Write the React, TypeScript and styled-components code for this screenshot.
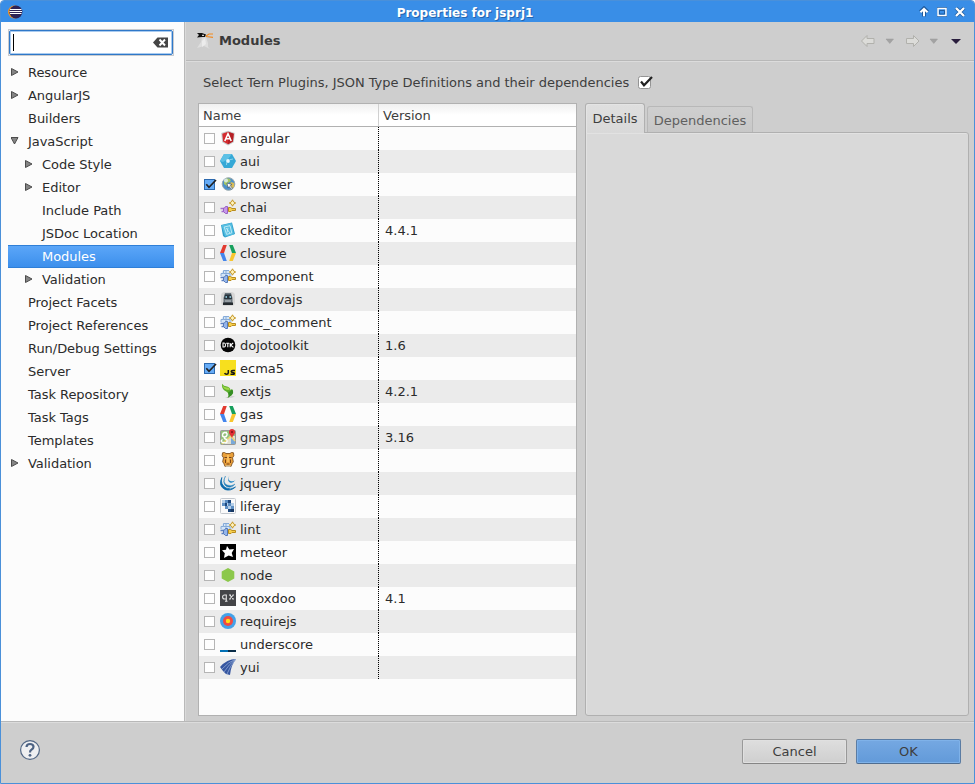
import React from "react";
import styled, { createGlobalStyle, css } from "styled-components";

const GlobalStyle = createGlobalStyle`
  * { box-sizing: border-box; }
  body { margin: 0; background: #fff; overflow: hidden; }
  svg { display: block; flex: none; }
`;

const Window = styled.div`
  width: 975px;
  height: 784px;
  border: 1px solid #4a90d9;
  border-radius: 4px 4px 0 0;
  background: #cecece;
  overflow: hidden;
  display: flex;
  flex-direction: column;
  font: 13px/23px "DejaVu Sans", sans-serif;
  color: #2b2b2b;
  white-space: nowrap;
`;

const TitleBar = styled.header`
  height: 21px;
  flex: none;
  display: grid;
  grid-template-columns: 80px 1fr 62px;
  align-items: center;
  padding: 0 0 0 7px;
  background: #398ee7;
`;

const Title = styled.h1`
  margin: 0;
  padding: 2px 70px 0 0;
  font-size: 12px;
  line-height: 20px;
  font-weight: bold;
  text-align: center;
  color: #fff;
  text-shadow: 1px 1px 0 #2465ae;
`;

const WindowControls = styled.div`
  display: flex;
  gap: 6px;
  padding: 0 0 0 6px;
`;

const Body = styled.div`
  height: 700px;
  flex: none;
  display: flex;
  border-bottom: 1px solid #b8b8b8;
`;

const Sidebar = styled.aside`
  width: 184px;
  flex: none;
  background: #fcfcfc;
  border-right: 1px solid #b9b9b9;
  padding: 7px 10px 0 7px;
`;

const SearchFrame = styled.div`
  width: 166px;
  height: 27px;
  border: 1px solid #c9cbce;
  margin-bottom: 5px;
`;

const SearchField = styled.div`
  height: 25px;
  border: 1px solid #2f78c8;
  box-shadow: inset 0 0 0 1px #a9cbf0;
  border-radius: 2px;
  background: #fff;
  display: flex;
  align-items: center;
  justify-content: space-between;
  padding: 0 4px 0 3px;
`;

const Caret = styled.span`
  width: 1px;
  height: 17px;
  background: #000;
`;

const TreeRow = styled.div<{ $level: number; $selected?: boolean }>`
  height: 23px;
  width: 166px;
  display: flex;
  align-items: center;
  letter-spacing: -0.04px;
  padding-left: ${(p) => 3 + p.$level * 14}px;
  ${(p) =>
    p.$selected &&
    css`
      color: #fff;
      background: linear-gradient(#5ba6f8, #3c8fec);
      border-top: 1px solid #2f7fd7;
      border-bottom: 1px solid #2f7fd7;
    `}
`;

const Twisty = styled.span`
  width: 17px;
  height: 8px;
  flex: none;
  margin-top: -2px;
`;

const Main = styled.main`
  flex: 1;
  border-left: 1px solid #dadada;
`;

const PageHeader = styled.div`
  height: 39px;
  border-bottom: 1px solid #b8b8b8;
  box-shadow: 0 1px 0 #dcdcdc;
  display: flex;
  align-items: center;
  padding: 0 12px 0 11px;
`;

const PageTitle = styled.h2`
  margin: -1px auto 0 5px;
  font-size: 13px;
  font-weight: bold;
  color: #3a3a3a;
`;

const Prompt = styled.div`
  height: 42px;
  display: flex;
  align-items: center;
  gap: 9px;
  padding: 1px 0 0 17px;
  letter-spacing: -0.03px;
  color: #3e3e3e;
`;

const Panels = styled.div`
  display: flex;
  gap: 8px;
  padding-left: 12px;
`;

const Table = styled.section`
  width: 379px;
  height: 613px;
  border: 1px solid #b1b1b1;
  background: #fcfcfc;
`;

const TableHeader = styled.div`
  height: 23px;
  display: grid;
  grid-template-columns: 180px 1fr;
  color: #3e3e3e;
  background: linear-gradient(#f0f0f0, #fff 50%);
  border-bottom: 1px solid #b1b1b1;
`;

const HeaderCell = styled.div`
  height: 22px;
  padding-left: 4px;
  & + & {
    border-left: 1px solid #d0d0d0;
    margin-left: -1px;
  }
`;

const TableRow = styled.div<{ $shaded: boolean }>`
  height: 23px;
  display: grid;
  grid-template-columns: 179px 1fr;
  background: ${(p) => (p.$shaded ? "#ebebeb" : "#fcfcfc")};
`;

const NameCell = styled.div`
  display: flex;
  align-items: center;
  padding-left: 5px;
`;

const Label = styled.span`
  margin-left: 4px;
`;

const VersionCell = styled.div`
  padding-left: 7px;
  background: repeating-linear-gradient(#000 0 1px, transparent 1px 2px) left top / 1px 100% no-repeat;
`;

const IconSlot = styled.span`
  width: 16px;
  height: 16px;
  margin: -1px 0 0 3px;
`;

const TabFolder = styled.section`
  width: 384px;
  height: 613px;
  display: flex;
  flex-direction: column;
`;

const TabStrip = styled.div`
  height: 29px;
  display: flex;
  align-items: flex-end;
  gap: 2px;
`;

const Tab = styled.div<{ $active?: boolean }>`
  border: 1px solid #b0b0b0;
  border-bottom: none;
  border-radius: 3px 3px 0 0;
  text-align: center;
  ${(p) =>
    p.$active
      ? css`
          width: 60px;
          height: 30px;
          line-height: 29px;
          margin-bottom: -1px;
          color: #3e3e3e;
          background: linear-gradient(#dfdfdf, #d9d9d9);
          box-shadow: inset 1px 1px 0 #e4e4e4;
          z-index: 1;
        `
      : css`
          width: 106px;
          height: 26px;
          line-height: 27px;
          color: #606060;
          border-color: #b8b8b8;
          background: linear-gradient(#cfcfcf, #c8c8c8);
        `}
`;

const TabPanel = styled.div`
  flex: 1;
  border: 1px solid #b0b0b0;
  border-radius: 0 3px 3px 3px;
  background: #d9d9d9;
  box-shadow: inset 1px 1px 0 #e2e2e2;
`;

const Footer = styled.footer`
  flex: 1;
  border-top: 1px solid #dcdcdc;
  display: flex;
  align-items: flex-start;
  gap: 9px;
  padding: 16px 13px 0 18px;
`;

const HelpButton = styled.span`
  margin: 0 auto 0 0;
`;

const Button = styled.button<{ $primary?: boolean }>`
  width: 105px;
  height: 25px;
  padding: 0;
  font: inherit;
  line-height: 23px;
  color: #3e3e3e;
  border-radius: 2px;
  border: 1px solid ${(p) => (p.$primary ? "#5b7ca3" : "#999")};
  border-bottom-color: ${(p) => (p.$primary ? "#4f6d90" : "#858585")};
  background: ${(p) => (p.$primary ? "linear-gradient(#75a8e2, #629ad9)" : "linear-gradient(#dedede, #cfcfcf)")};
  box-shadow: inset 0 0 0 1px ${(p) => (p.$primary ? "#7fb2e9" : "#e0e0e0")};
`;

const Arrow = ({ open }: { open?: boolean }) => (
  <svg width="8" height="8" viewBox="0 0 8 8">
    <path d={open ? "M0 .5h7L3.500 7z" : "M.5.5v7L7 4z"} fill="#858585" stroke="#4c4c4c" />
  </svg>
);

const Check = ({ on }: { on?: boolean }) => (
  <svg width="13" height="13" viewBox="0 0 13 13">
    <rect x=".5" y="1.500" width="10" height="10" fill={on ? "#66acf7" : "#fefefe"} stroke={on ? "#2c69ae" : "#b5b5b5"} />
    {on && <path d="M2.300 6.300 5 9.300 12 2" fill="none" stroke="#222" strokeWidth="1.700" />}
  </svg>
);

const Plug = ({ chai }: { chai?: boolean }) => (
  <>
    {!chai && (
      <>
        <path d="M1 8.500V6l2-3.500h7L12 6v2.500z" fill="#d3e5f8" />
        <path d="M1 8V5.500h2.500V2.500H9M3.500 5.500H10V8M6 3v5" fill="none" stroke="#86abd8" />
      </>
    )}
    <path d="M.5 9.500h3M1.500 12.500h3" stroke={chai ? "#a56fd0" : "#5b80c2"} strokeWidth="1.600" />
    <path d="M3.500 9h1l1-1.500h2v7h-2l-2-2z" fill={chai ? "#c697e8" : "#94b5ea"} stroke={chai ? "#985fc4" : "#5579b8"} />
    <path d="M8.500 8.500h2l1.500 1h3.500v2H12l-1 1H8.500z" fill="#f7cf4c" stroke="#b98c1f" />
    <path d="m12.500.8 1.100 2.100L15.700 4l-2.100 1.100-1.100 2.100-1.100-2.100L9.300 4l2.100-1.100z" fill="#fff3bd" stroke="#c39624" />
  </>
);

const Brackets = () => (
  <>
    <path d="M3.200 0H6.800L4 8H0z" fill="#e23b30" />
    <path d="M0 8h4l2.800 8H3.200z" fill="#4385ec" />
    <path d="M9.200 0h3.600L16 8h-4z" fill="#17a05d" />
    <path d="M12 8h4l-3.200 8H9.200z" fill="#f8c62e" />
  </>
);

const icons: Record<string, React.ReactNode> = {
  angular: (
    <>
      <path d="m8 .8 6.800 2.300-1 9.200L8 15.500l-5.800-3.200-1-9.200z" fill="#c6cacb" />
      <path d="m8 1.800 5.700 1.900-.8 7.900L8 14.300l-4.900-2.700-.8-7.900z" fill="#d52a2f" />
      <path d="m8 1.800 5.700 1.900-.8 7.900L8 14.300z" fill="#b52025" />
      <path d="M4.800 11 8 3.800l3.200 7.200M6 8.700h4" fill="none" stroke="#fff" strokeWidth="1.600" />
    </>
  ),
  aui: (
    <>
      <path d="M4 1h8l4 7-4 7H4L0 8z" fill="#35a8d6" />
      <path d="M4 1h8l-4 5-5 3-3-1z" fill="#5cc0e5" />
      <circle cx="8" cy="8" r="1.900" fill="#e6f7fd" />
      <path d="m9.500 6.800 3.500-.8M6.800 9.200 6.500 12" stroke="#8cd5ee" />
    </>
  ),
  browser: (
    <>
      <circle cx="8.500" cy="8" r="6.300" fill="#4c91cb" stroke="#9ba9ad" />
      <path d="M4 5q2-4 6-2l1 2-3 2-1 3-3-2z" fill="#a1c466" />
      <path d="m11 6 3 1v4l-3 2-2-3z" fill="#d8bd58" />
      <circle cx="6" cy="4.500" r="2" fill="#e9f7ff" opacity=".75" />
      <path d="m7 7 5 1.500-1.800 1 2.200 2.800-1 .9-2.300-2.700L8 12z" fill="#fff" stroke="#324761" strokeWidth=".6" />
    </>
  ),
  chai: <Plug chai />,
  ckeditor: (
    <>
      <path d="m1 3 11-2.500L15 12 5 15.500 3 14z" fill="#2f9fcb" />
      <path d="m1.500 3.300 10-2.400L14 12.400 5 14.500z" fill="#56bee1" />
      <path d="m4.200 5 5.800-1.300 1.800 7.200-5.200 1.500zM6 6l4 5M8 5.800l-1 4.800" fill="none" stroke="#c5edf8" strokeWidth=".9" />
    </>
  ),
  closure: <Brackets />,
  component: <Plug />,
  cordovajs: (
    <>
      <rect x="1" y="1" width="14" height="14" rx="4" fill="#d6d6d6" />
      <path d="M5 2h6l1.500 5v5h-9V7z" fill="#6a757d" />
      <path d="M5 3.500h6l1 4.500H4z" fill="#27333c" />
      <path d="M5.500 6h1.500m2.500 0H11" stroke="#9edff4" strokeWidth="1.600" />
      <path d="M3 11.500h10v2.500H3z" fill="#252b30" />
      <path d="M5 10h6" stroke="#c0c6c9" />
    </>
  ),
  doc_comment: <Plug />,
  dojotoolkit: (
    <>
      <circle cx="8" cy="8" r="7.300" fill="#050505" />
      <path d="M3 6v4h1.200q1.300 0 1.300-2T4.200 6zM6.200 6.200h3M7.800 6v4.300M10.200 6v4.300m3-4.300-2.600 2 2.800 2.300" fill="none" stroke="#fff" strokeWidth="1.100" />
    </>
  ),
  ecma5: (
    <>
      <path d="M0 0h16v16H0z" fill="#f7df1e" />
      <path d="M8.300 10v2.700q0 1.500-1.800 1.500-1.500 0-1.800-1.200M15 10.600h-2.300q-1.500 0-1.500.9t1.600.9 1.600 1-1.500.9h-2.400" fill="none" stroke="#171717" strokeWidth="1.500" />
    </>
  ),
  extjs: (
    <>
      <path d="M5 14.500q7-2.500 10-1-5 2.500-10 1z" fill="#cfcfcf" />
      <path d="M2 .8q1.500 2.400 5 2.700 3 .5 3.500 3.500l1.500-.8q2.500 3-.5 6L7.500 15q2-2.500.5-5-1-1.500-3.500-2.500Q1.500 5.500 2 .8z" fill="#5eb02c" />
      <path d="M8 9.500q2.500-1 4-3.300 2.500 3-.5 6L7.500 15q2-2.500.5-5.500z" fill="#368d24" />
      <path d="M2.300 2Q4 4.800 9 4.800L9.500 7Q3 7 2.300 2z" fill="#9fd649" />
    </>
  ),
  gas: <Brackets />,
  gmaps: (
    <>
      <rect x=".5" y="1.500" width="15" height="14" rx="1" fill="#94c07c" stroke="#999" />
      <path d="m5 15 5-8h5v8z" fill="#e2dfcf" />
      <path d="m11 9 4 2v4h-4z" fill="#79a9d9" />
      <path d="m2 15 9-8 4 5" fill="none" stroke="#f1d470" strokeWidth="1.500" />
      <path d="M7 3.500H4.500Q2.500 4 2.500 6t2 2T7 6 5.500 3.800M5 8q-1.500 1.500.5 2t1.500 2.500-4 1-.5-3" fill="none" stroke="#fff" strokeWidth="1.400" />
      <path d="M12 9C11 6 8.800 5.500 9 3q.3-3 3-3t3 3c0 2.500-2 3-3 6z" fill="#e02f34" />
      <circle cx="12" cy="3" r="1" fill="#7c1118" />
    </>
  ),
  grunt: (
    <>
      <path d="M2.500.8 4.500.5 6 1.500h4L11.500.5l2 .3.300 3-1.300 2 .8 4-1.300 2L11 14.500H5l-1-2.700-1.300-2 .8-4-1.300-2z" fill="#eaa03a" stroke="#80501f" strokeWidth=".9" />
      <path d="M4.500 5.500H7m2 0h2.500M5.500 7.500v3.500m5-3.500v3.500M6.500 12h3" fill="none" stroke="#764318" />
      <path d="M7 3h2v7H7z" fill="#f8bd5d" />
      <path d="M5.500 13.500h5v1.500h-5z" fill="#c9c0ad" />
    </>
  ),
  jquery: (
    <>
      <path d="M1.800 2.500Q-2 11 5 14.500q5.500 2 10.500-2.500-4.500 3.500-9.500 1-6-3.500-4.200-10.500z" fill="#0868ab" stroke="#0868ab" strokeWidth=".8" />
      <path d="M5.500 1Q2 7.500 7 10q4.500 2 8-1-3.500 5-8.500 2.500Q1.500 8 5.500 1z" fill="#1478b8" stroke="#1478b8" strokeWidth=".4" />
      <path d="M9.500.5q-2.500 4.500 1 5.500 3 1 5-1.200Q13 9 9.500 7.200 6.500 5 9.500.5z" fill="#2d8cc7" />
    </>
  ),
  liferay: (
    <>
      <rect x=".5" y=".5" width="15" height="15" rx="1" fill="#fafafa" stroke="#c4c8ce" />
      <path d="M2 2h3v3H2zM5 5h3v3H5zM8 8h3v3H8zM11 5h3v3h-3z" fill="#b5cfe9" />
      <path d="M5 2h3v3H5zM2 5h3v3H2zM8 5h3v3H8zM5 8h3v3H5zM11 8h3v3h-3z" fill="#5d8fc4" />
      <path d="M8 2h3v3H8zM8 11h3v3H8zM5 5h2v3H5z" fill="#1c477d" />
      <path d="M11 11h3v3h-3z" fill="#173762" />
    </>
  ),
  lint: <Plug />,
  meteor: (
    <>
      <path d="M0 0h16v16H0z" fill="#000" />
      <path d="m7 2 2.400 3.400L14 5l-2.300 4 1.300 4-4.300-1.500L4 14l.8-4.800L2 6.200l4-.4z" fill="#fff" />
    </>
  ),
  node: <path d="m8 1 6.300 3.500v7L8 15l-6.300-3.500v-7z" fill="#8cc84b" />,
  qooxdoo: (
    <>
      <path d="M0 0h16v16H0z" fill="#444548" />
      <path d="M6.300 5H4.600q-2 0-2 2t2 2h1.700M6.300 4.500v7M5 11.300h2.500M9 5h2m1.500 0H14M9 9h1.800m1.500 0H14M9.800 5l3.400 4M13.200 5 9.800 9" fill="none" stroke="#e4e4e4" strokeWidth="1.100" />
    </>
  ),
  requirejs: (
    <>
      <circle cx="8" cy="8" r="8" fill="#43a1e9" />
      <circle cx="8" cy="8" r="5" fill="#f14a43" />
      <circle cx="8" cy="8" r="2.200" fill="#ffdf15" />
    </>
  ),
  underscore: (
    <>
      <path d="M0 14h8v2H0z" fill="#0371b5" />
      <path d="M8 14h8v2H8z" fill="#0a2d49" />
    </>
  ),
  yui: (
    <>
      <path d="M0 8Q7 0 16 0q-5 6-6 16l-4-1-3-3z" fill="#3656a0" />
      <path d="M2 10Q8 3 16 0M4 13Q9 5 16 0M7 15q3-8 9-15" fill="none" stroke="#91a8d4" strokeWidth=".8" />
    </>
  ),
};

const plugins: { name: string; version?: string; on?: boolean }[] = [
  { name: "angular" },
  { name: "aui" },
  { name: "browser", on: true },
  { name: "chai" },
  { name: "ckeditor", version: "4.4.1" },
  { name: "closure" },
  { name: "component" },
  { name: "cordovajs" },
  { name: "doc_comment" },
  { name: "dojotoolkit", version: "1.6" },
  { name: "ecma5", on: true },
  { name: "extjs", version: "4.2.1" },
  { name: "gas" },
  { name: "gmaps", version: "3.16" },
  { name: "grunt" },
  { name: "jquery" },
  { name: "liferay" },
  { name: "lint" },
  { name: "meteor" },
  { name: "node" },
  { name: "qooxdoo", version: "4.1" },
  { name: "requirejs" },
  { name: "underscore" },
  { name: "yui" },
];

const tree: { label: string; level?: number; arrow?: "open" | "closed"; selected?: boolean }[] = [
  { label: "Resource", arrow: "closed" },
  { label: "AngularJS", arrow: "closed" },
  { label: "Builders" },
  { label: "JavaScript", arrow: "open" },
  { label: "Code Style", level: 1, arrow: "closed" },
  { label: "Editor", level: 1, arrow: "closed" },
  { label: "Include Path", level: 1 },
  { label: "JSDoc Location", level: 1 },
  { label: "Modules", level: 1, selected: true },
  { label: "Validation", level: 1, arrow: "closed" },
  { label: "Project Facets" },
  { label: "Project References" },
  { label: "Run/Debug Settings" },
  { label: "Server" },
  { label: "Task Repository" },
  { label: "Task Tags" },
  { label: "Templates" },
  { label: "Validation", arrow: "closed" },
];

const EclipseLogo = () => (
  <svg width="15" height="15" viewBox="0 0 15 15">
    <circle cx="6.500" cy="7" r="6.500" fill="#f7941e" />
    <circle cx="7.900" cy="7" r="6.500" fill="#2c2255" />
    <path d="M2 4.500h11.500M1.500 6.500h12.500M2 8.500h11.500" stroke="#fff" />
  </svg>
);

const ControlIcons = () => (
  <WindowControls>
    <svg width="12" height="12" viewBox="0 0 12 12">
      <path d="M6 10.500v-8M2.500 6 6 2.500 9.500 6" fill="none" stroke="#1f5c9f" strokeWidth="4" />
      <path d="M6 10.300V3M2.500 6.300 6 2.800l3.500 3.500" fill="none" stroke="#fff" strokeWidth="2" />
    </svg>
    <svg width="12" height="12" viewBox="0 0 12 12">
      <path d="M1 1h10v10H1z" fill="#1f5c9f" />
      <path d="M2 2.500h8v7H2z" fill="#398ee7" stroke="#fff" strokeWidth="1.500" />
      <path d="M3.500 4.500h5v3.500h-5z" fill="none" stroke="#1f5c9f" />
    </svg>
    <svg width="12" height="12" viewBox="0 0 12 12">
      <path d="m2 2 8 8m0-8-8 8" stroke="#1f5c9f" strokeWidth="3.800" />
      <path d="m2 2 8 8m0-8-8 8" stroke="#fff" strokeWidth="2.300" />
    </svg>
  </WindowControls>
);

const ClearIcon = () => (
  <svg width="15" height="11" viewBox="0 0 15 11">
    <path d="M0 5.500 4.500.5H15v10H4.500z" fill="#454545" />
    <path d="m6.500 2.500 5.500 6m0-6-5.500 6" stroke="#fff" strokeWidth="1.900" />
  </svg>
);

const TernIcon = () => (
  <svg width="17" height="17" viewBox="0 0 17 17">
    <path d="m5 5 4-1 2 6v4l2 2-4-2-2-1-7 2 4-6z" fill="#dedede" />
    <path d="m5 8 3-3 1 6-4 3z" fill="#ececec" />
    <path d="M0 0h5l4 1.500L8 4H5L0 4.500 2 2z" fill="#111" />
    <path d="M5 2.300h2" stroke="#fff" />
    <path d="M9 3 12 1h4M9 3.500l7 .8" fill="none" stroke="#f38b20" strokeWidth="1.200" />
  </svg>
);

const NavIcons = () => (
  <svg width="102" height="16" viewBox="0 0 102 16">
    <g fill="#dcdcd9" stroke="#b1b1ac">
      <path d="m1.500 8 5.500-5.500v3h7v5H7v3z" />
      <path d="m59 8-5.500-5.500v3h-7v5h7v3z" />
    </g>
    <path d="M26 6h7.500L29.800 10.500zM70 6h7.500L73.800 10.500z" fill="#a3a3a3" stroke="#999" strokeWidth=".5" />
    <path d="M91 6h10L96 11z" fill="#291d3d" />
  </svg>
);

export default function App() {
  return (
    <>
      <GlobalStyle />
      <Window>
        <TitleBar>
          <EclipseLogo />
          <Title>Properties for jsprj1</Title>
          <ControlIcons />
        </TitleBar>
        <Body>
          <Sidebar>
            <SearchFrame>
              <SearchField>
                <Caret />
                <ClearIcon />
              </SearchField>
            </SearchFrame>
            {tree.map((item, i) => (
              <TreeRow key={i} $level={item.level ?? 0} $selected={item.selected}>
                <Twisty>{item.arrow && <Arrow open={item.arrow === "open"} />}</Twisty>
                {item.label}
              </TreeRow>
            ))}
          </Sidebar>
          <Main>
            <PageHeader>
              <TernIcon />
              <PageTitle>Modules</PageTitle>
              <NavIcons />
            </PageHeader>
            <Prompt>
              Select Tern Plugins, JSON Type Definitions and their dependencies
              <svg width="16" height="15" viewBox="0 0 16 15">
                <rect x=".5" y="1.500" width="12" height="12" rx="2" fill="#fff" stroke="#949494" />
                <path d="M3 6.500 6 10.300 14 2" fill="none" stroke="#222" strokeWidth="2.200" />
              </svg>
            </Prompt>
            <Panels>
              <Table>
                <TableHeader>
                  <HeaderCell>Name</HeaderCell>
                  <HeaderCell>Version</HeaderCell>
                </TableHeader>
                {plugins.map((p, i) => (
                  <TableRow key={p.name} $shaded={i % 2 === 1}>
                    <NameCell>
                      <Check on={p.on} />
                      <IconSlot>
                        <svg width="16" height="16" viewBox="0 0 16 16">{icons[p.name]}</svg>
                      </IconSlot>
                      <Label>{p.name}</Label>
                    </NameCell>
                    <VersionCell>{p.version}</VersionCell>
                  </TableRow>
                ))}
              </Table>
              <TabFolder>
                <TabStrip>
                  <Tab $active>Details</Tab>
                  <Tab>Dependencies</Tab>
                </TabStrip>
                <TabPanel />
              </TabFolder>
            </Panels>
          </Main>
        </Body>
        <Footer>
          <HelpButton>
            <svg width="22" height="22" viewBox="0 0 22 22">
              <circle cx="11" cy="11" r="9.400" fill="#eeeff1" stroke="#506684" strokeWidth="1.200" />
              <path d="M7.500 8q.2-3 3.500-3t3.500 2.700q0 1.800-1.800 2.700T11 13.500" fill="none" stroke="#4d6384" strokeWidth="2.200" />
              <circle cx="11" cy="16.300" r="1.400" fill="#4d6384" />
            </svg>
          </HelpButton>
          <Button>Cancel</Button>
          <Button $primary>OK</Button>
        </Footer>
      </Window>
    </>
  );
}
